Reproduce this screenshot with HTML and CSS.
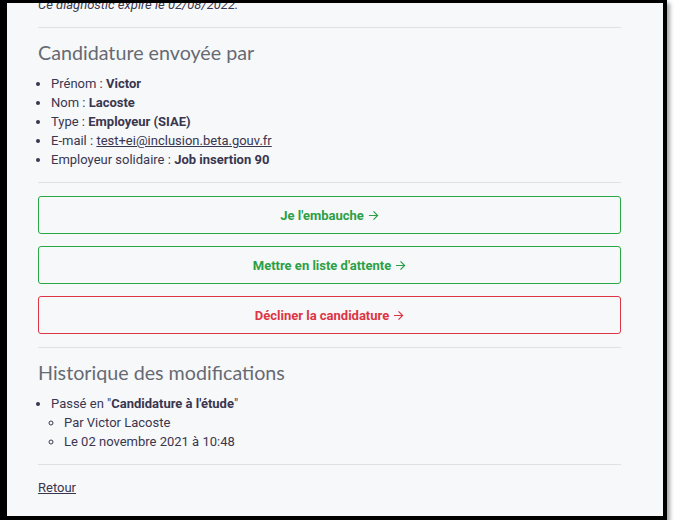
FILE: index.html
```html
<!DOCTYPE html>
<html lang="fr">
<head>
<meta charset="utf-8">
<title>Candidature</title>
<link rel="stylesheet" href="styles.css">
</head>
<body>
<div class="frame">
  <div class="content">
    <p class="expiry">Ce diagnostic expire le 02/08/2022.</p>
    <hr class="rule">
    <h2 class="title">Candidature envoyée par</h2>
    <ul class="list">
      <li>Prénom : <b>Victor</b></li>
      <li>Nom : <b>Lacoste</b></li>
      <li>Type : <b>Employeur (SIAE)</b></li>
      <li>E-mail : <a class="link" href="#">test+ei@inclusion.beta.gouv.fr</a></li>
      <li>Employeur solidaire : <b>Job insertion 90</b></li>
    </ul>
    <hr class="rule">
    <div class="actions">
      <a class="btn btn-green" href="#">Je l'embauche <svg class="arrow" viewBox="0 0 12 12"><path d="M1 6h9.5M6 1.5L10.5 6 6 10.5"/></svg></a>
      <a class="btn btn-green" href="#">Mettre en liste d'attente <svg class="arrow" viewBox="0 0 12 12"><path d="M1 6h9.5M6 1.5L10.5 6 6 10.5"/></svg></a>
      <a class="btn btn-red" href="#">Décliner la candidature <svg class="arrow" viewBox="0 0 12 12"><path d="M1 6h9.5M6 1.5L10.5 6 6 10.5"/></svg></a>
    </div>
    <hr class="rule">
    <h2 class="title">Historique des modifications</h2>
    <ul class="list">
      <li>Passé en "<b>Candidature à l'étude</b>"
        <ul class="sublist">
          <li>Par Victor Lacoste</li>
          <li>Le 02 novembre 2021 à 10:48</li>
        </ul>
      </li>
    </ul>
    <hr class="rule">
    <a class="link back" href="#">Retour</a>
  </div>
</div>
</body>
</html>
```
FILE: styles.css
```css
html, body {
  margin: 0;
  padding: 0;
  background: #ffffff;
}
body {
  font-family: Roboto, "Liberation Sans", sans-serif;
  font-size: 13px;
  line-height: 19px;
  color: #39364f;
}
.frame {
  width: 656px;
  height: 513px;
  border-style: solid;
  border-color: #000;
  border-width: 3px 4px 4px 7px;
  background: #f7f8fa;
  overflow: hidden;
  box-shadow: 3px 3px 4px rgba(0, 0, 0, 0.35);
}
.content {
  width: 583px;
  padding-left: 31px;
}
.expiry {
  margin: -8px 0 0;
  font-style: italic;
}
.rule {
  border: 0;
  border-top: 1px solid #dfe1e5;
  margin: 13px 0;
  height: 0;
}
.title {
  font-family: Lato, "Open Sans", sans-serif;
  font-weight: 400;
  font-size: 19.7px;
  line-height: 24px;
  color: #666a73;
  margin: 0 0 9px;
}
.list {
  margin: 0;
  padding-left: 13px;
}
.sublist {
  margin: 0;
  padding-left: 13px;
  list-style-type: circle;
}
.list b {
  font-weight: 700;
}
.link {
  color: #39364f;
  text-decoration: underline;
}
.actions {
  display: flex;
  flex-direction: column;
  gap: 12px;
}
.btn {
  display: flex;
  align-items: center;
  justify-content: center;
  gap: 4px;
  height: 36px;
  border: 1px solid;
  border-radius: 3px;
  font-weight: 700;
  font-size: 13px;
  text-decoration: none;
}
.btn-green {
  color: #2c9f45;
  border-color: #2aa745;
}
.btn-red {
  color: #dc3545;
  border-color: #dc3545;
}
.arrow {
  width: 11px;
  height: 11px;
  fill: none;
  stroke: currentColor;
  stroke-width: 1.3;
}
.back {
  display: inline-block;
}
```
